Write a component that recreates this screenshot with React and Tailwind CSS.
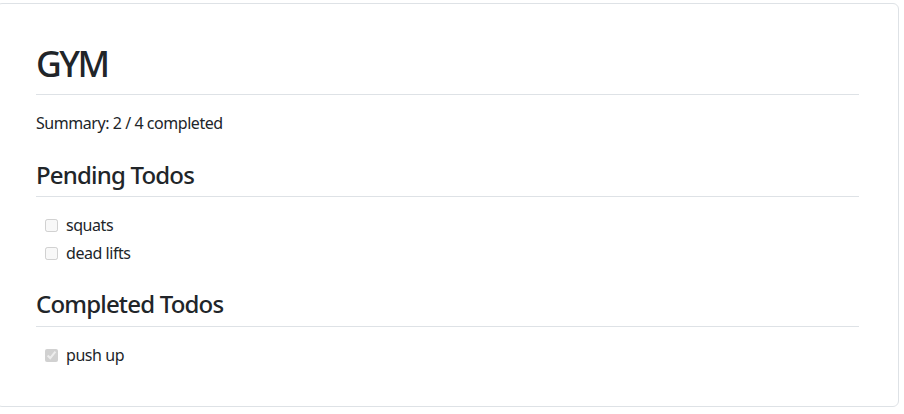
const pending = ['squats', 'dead lifts']
const completed = ['push up']

function TodoRow({ label, done }) {
  return (
    <li className="flex items-center h-[28px] pl-[5px]">
      <input
        type="checkbox"
        disabled
        checked={done}
        readOnly
        className="m-0 ml-[4px] w-[13px] h-[13px]"
      />
      <span className="ml-[8px]">{label}</span>
    </li>
  )
}

export default function App() {
  return (
    <div className="pt-[3px] bg-white font-['Noto_Sans','Open_Sans',sans-serif] text-[#212529] tracking-[-0.028em]">
      <div className="-ml-[4px] w-[903px] h-[404px] border border-[#dee2e6] rounded-[6px] bg-white px-[39px] pt-[38px]">
        {/* Title */}
        <h1 className="text-[35.5px] leading-[1.2] font-medium tracking-[-0.07em] pb-[9px] border-b border-[#dee2e6]">
          GYM
        </h1>
        <p className="mt-[16px] text-[16px] leading-[24px]">Summary: 2 / 4 completed</p>

        {/* Pending */}
        <h3 className="mt-[26px] text-[24px] leading-[1.2] font-medium tracking-[-0.034em] pb-[7px] border-b border-[#dee2e6]">
          Pending Todos
        </h3>
        <ul className="mt-[14px] text-[16px]">
          {pending.map((t) => (
            <TodoRow key={t} label={t} done={false} />
          ))}
        </ul>

        {/* Completed */}
        <h3 className="mt-[23px] text-[24px] leading-[1.2] font-medium tracking-[-0.034em] pb-[7px] border-b border-[#dee2e6]">
          Completed Todos
        </h3>
        <ul className="mt-[14px] text-[16px]">
          {completed.map((t) => (
            <TodoRow key={t} label={t} done={true} />
          ))}
        </ul>
      </div>
    </div>
  )
}
